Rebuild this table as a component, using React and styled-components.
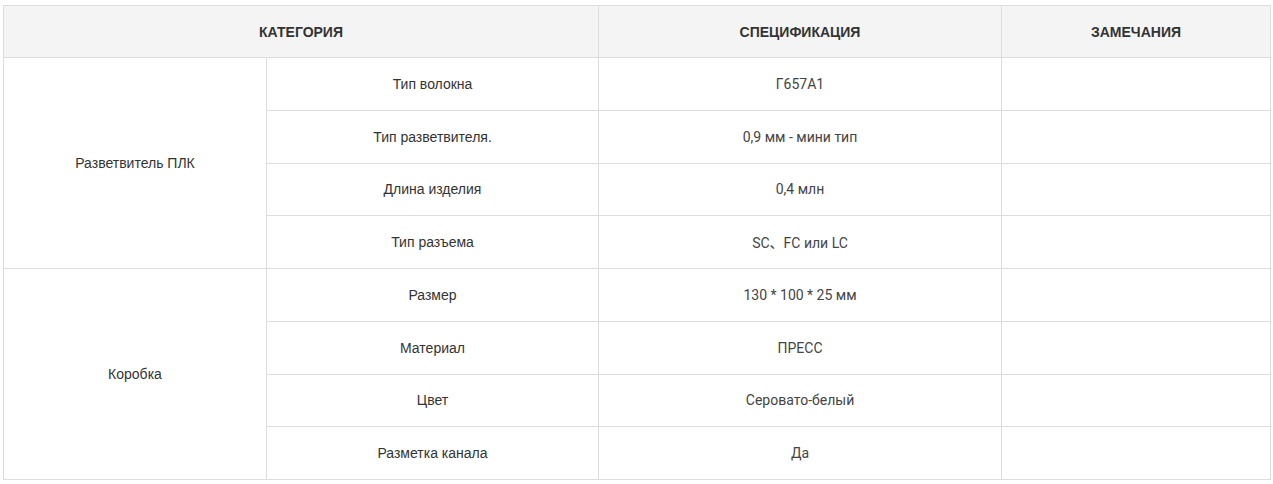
import styled, { createGlobalStyle } from 'styled-components';

const GlobalStyle = createGlobalStyle`
  body {
    margin: 0;
    background: #fff;
    font-family: "Liberation Sans", Arial, sans-serif;
  }
`;

const Wrapper = styled.div`
  padding: 5px 3px 0 3px;
`;

const Table = styled.table`
  width: 1267px;
  border-collapse: collapse;
  table-layout: fixed;
  color: #333;
  font-size: 14px;
`;

const HeadCell = styled.th`
  height: 51px;
  padding: 0;
  background: #f4f4f4;
  border: 1px solid #ddd;
  font-weight: bold;
  font-size: 14px;
  color: #333;
  text-align: center;
  vertical-align: middle;
`;

const Cell = styled.td`
  height: 51.75px;
  padding: 0;
  border: 1px solid #ddd;
  text-align: center;
  vertical-align: middle;
  font-family: ${props => (props.$spec
    ? '"Roboto", "Noto Sans CJK SC", sans-serif'
    : '"Liberation Sans", Arial, sans-serif')};
  font-size: 14px;
  color: ${props => (props.$spec ? '#444' : '#333')};
`;

const groups = [
  {
    name: 'Разветвитель ПЛК',
    rows: [
      ['Тип волокна', 'Г657А1'],
      ['Тип разветвителя.', '0,9 мм - мини тип'],
      ['Длина изделия', '0,4 млн'],
      ['Тип разъема', 'SC、FC или LC'],
    ],
  },
  {
    name: 'Коробка',
    rows: [
      ['Размер', '130 * 100 * 25 мм'],
      ['Материал', 'ПРЕСС'],
      ['Цвет', 'Серовато-белый'],
      ['Разметка канала', 'Да'],
    ],
  },
];

const App = () => (
  <Wrapper>
    <GlobalStyle />
    <Table>
      <colgroup>
        <col style={{ width: 263 }} />
        <col style={{ width: 332 }} />
        <col style={{ width: 403 }} />
        <col style={{ width: 269 }} />
      </colgroup>
      <thead>
        <tr>
          <HeadCell colSpan={2}>КАТЕГОРИЯ</HeadCell>
          <HeadCell>СПЕЦИФИКАЦИЯ</HeadCell>
          <HeadCell>ЗАМЕЧАНИЯ</HeadCell>
        </tr>
      </thead>
      <tbody>
        {groups.map(group =>
          group.rows.map(([label, value], i) => (
            <tr key={group.name + label}>
              {i === 0 && <Cell rowSpan={group.rows.length}>{group.name}</Cell>}
              <Cell>{label}</Cell>
              <Cell $spec>{value}</Cell>
              <Cell />
            </tr>
          ))
        )}
      </tbody>
    </Table>
  </Wrapper>
);

export default App;
